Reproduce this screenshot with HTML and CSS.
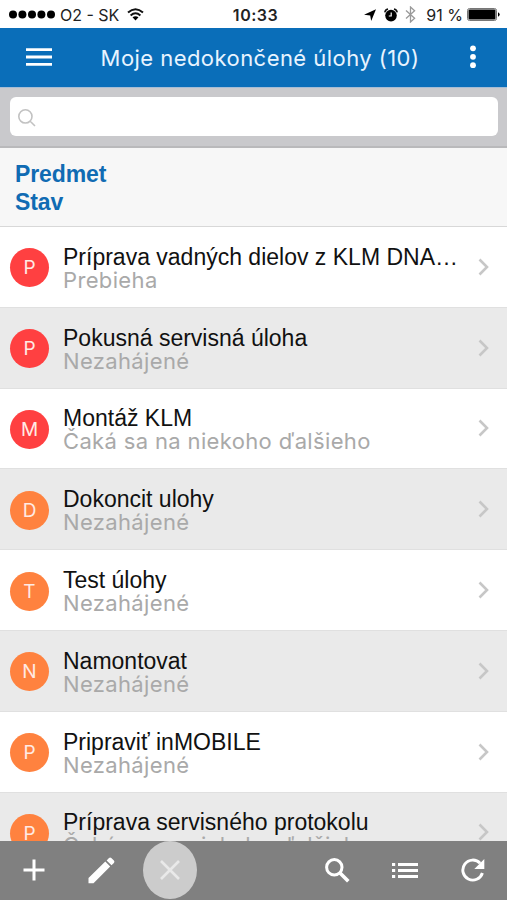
FILE: index.html
```html
<!DOCTYPE html>

<html lang="sk">
    <head>
        <title>Moje úlohy</title>
        <meta charset="UTF-8">
        <meta name="viewport" content="width=device-width, initial-scale=1.0">

        <link rel="stylesheet" href="styles.css">

    </head>
    <body>
        <div class="page">
            <div class="status">
                <div class="signal">
                    <svg width="46" height="9" viewBox="0 0 46 9">
                        <circle cx="4" cy="4.5" r="4"/><circle cx="13.4" cy="4.5" r="4"/><circle cx="23" cy="4.5" r="4"/><circle cx="32.4" cy="4.5" r="4"/><circle cx="42" cy="4.5" r="4"/>
                    </svg>
                    <span class="carrier">O2 - SK</span>
                    <svg class="wifi" width="17" height="13" viewBox="0 0 17 13">
                        <path d="M1 4.6Q8.5-2 16 4.6M3.6 7.4Q8.5 3.2 13.4 7.4" fill="none" stroke="#111" stroke-width="2"/>
                        <path d="M5.5 9.3Q8.5 7 11.5 9.3L8.5 12.5z"/>
                    </svg>
                </div>
                <span class="time">10:33</span>
                <div class="right">
                    <svg width="12" height="12" viewBox="0 0 12 12"><path d="M12 .3L7.2 12 6.2 6.6 0 5.8z"/></svg>
                    <svg class="alarm" width="14" height="14" viewBox="0 0 14 14">
                        <circle cx="7" cy="7.6" r="5.8"/>
                        <path d="M.8 4.4Q1.2 1.6 4 1M13.2 4.4Q12.8 1.6 10 1" stroke="#111" stroke-width="1.5" fill="none"/>
                        <path d="M7.2 4.6V8H4.8" stroke="#fff" stroke-width="1.2" fill="none"/>
                    </svg>
                    <svg class="bt" width="11" height="17" viewBox="0 0 11 17"><path d="M1 4.5L9.6 12.3 5.5 16V1L9.6 4.7 1 12.5" fill="none" stroke="#999" stroke-width="1.3"/></svg>
                    <span class="percent">91 %</span>
                    <svg width="33" height="13" viewBox="0 0 33 13">
                        <rect x=".5" y=".5" width="29" height="12" rx="2" fill="none" stroke="#777"/>
                        <rect x="1.5" y="1.5" width="27" height="10" rx="1"/>
                        <path d="M31 4.3Q32.7 5 32.7 6.5T31 8.7z"/>
                    </svg>
                </div>
            </div>
            <div class="header">
                <svg class="menu" width="26" height="18" viewBox="0 0 26 18"><path d="M0 1.6h26M0 9h26M0 16.4h26" stroke="#fff" stroke-width="2.8"/></svg>
                <h1>Moje nedokončené úlohy (10)</h1>
                <svg width="6" height="24" viewBox="0 0 6 24" fill="#fff"><circle cx="3" cy="3.3" r="2.9"/><circle cx="3" cy="11.8" r="2.9"/><circle cx="3" cy="20.2" r="2.9"/></svg>
            </div>
            <div class="search">
                <div class="searchBox">
                    <svg width="18" height="18" viewBox="0 0 18 18"><path d="M12 12l5 5M14 7.4a6.6 6.6 0 1 1-13.2 0a6.6 6.6 0 0 1 13.2 0z" fill="none" stroke="#c2c2c2" stroke-width="1.6"/></svg>
                </div>
            </div>
            <div class="columns">
                <div>Predmet</div>
                <div>Stav</div>
            </div>
            <div class="list" id="list"></div>
            <div class="toolbar">
                <svg class="add" width="22" height="22" viewBox="0 0 22 22"><path d="M11 .5v21M.5 11h21" stroke="#fff" stroke-width="3"/></svg>
                <svg class="edit" width="27" height="27" viewBox="0 0 27 27" fill="#fff"><path d="M.5 21L17.3 4.6l4.9 4.9L5.5 26.3H.5zM18.6 3.4L21 1q1.2-1 2.3 0l2.6 2.6q1.1 1.2 0 2.3l-2.4 2.4z"/></svg>
                <div class="cancel">
                    <svg width="20" height="20" viewBox="0 0 20 20"><path d="M1 1l18 18M19 1L1 19" stroke="#e9e9e9" stroke-width="2.6"/></svg>
                </div>
                <svg class="find" width="25" height="25" viewBox="0 0 25 25" fill="none" stroke="#fff"><circle cx="9.3" cy="9.3" r="7.7" stroke-width="3"/><path d="M14.8 14.8l8.5 8.5" stroke-width="3.6"/></svg>
                <svg class="lines" width="26" height="15" viewBox="0 0 26 15"><path d="M0 1.5h3.2M6 1.5h20M0 7.5h3.2M6 7.5h20M0 13.5h3.2M6 13.5h20" stroke="#fff" stroke-width="2.8"/></svg>
                <svg class="reload" width="24" height="24" viewBox="0 0 24 24"><path d="M19.1 5.2A10 10 0 1 0 21.4 15" fill="none" stroke="#fff" stroke-width="2.9"/><path d="M23.3 1v10H13.3z" fill="#fff"/></svg>
            </div>
        </div>
        <script>
            //name, state, color class
            var tasks = [
                ["Príprava vadných dielov z KLM DNA…", "Prebieha", "red"],
                ["Pokusná servisná úloha", "Nezahájené", "red"],
                ["Montáž KLM", "Čaká sa na niekoho ďalšieho", "red"],
                ["Dokoncit ulohy", "Nezahájené", "orange"],
                ["Test úlohy", "Nezahájené", "orange"],
                ["Namontovat", "Nezahájené", "orange"],
                ["Pripraviť inMOBILE", "Nezahájené", "orange"],
                ["Príprava servisného protokolu", "Čaká sa na niekoho ďalšieho", "orange"]
            ];
            var list = document.querySelector("#list");

            tasks.forEach(function(t){
                list.innerHTML += '<div class="row">' +
                    '<div class="avatar ' + t[2] + '">' + t[0][0] + '</div>' +
                    '<div class="text"><div class="name">' + t[0] + '</div><div class="state">' + t[1] + '</div></div>' +
                    '<svg class="arrow" width="11" height="18" viewBox="0 0 11 18"><path d="M1.5 1.5L9 9l-7.5 7.5" fill="none" stroke="#c7c7c7" stroke-width="2.6"/></svg>' +
                    '</div>';
            });
        </script>
    </body>
</html>
```
FILE: styles.css
```css
body{
    margin: 0;
    font-family: Inter, sans-serif;
}
svg{
    display: block;
    flex: none;
}
.page{
    width: 507px;
    height: 900px;
    display: flex;
    flex-direction: column;
    overflow: hidden;
    background: #fff;
}
.status{
    height: 28px;
    flex: none;
    display: grid;
    grid-template-columns: 1fr auto 1fr;
    align-items: center;
    padding: 1px 7px 0 9px;
    box-sizing: border-box;
    font-size: 16px;
    color: #222;
}
.signal, .right{
    display: flex;
    align-items: center;
}
.right{
    justify-content: flex-end;
}
.carrier{
    margin: 0 8px 0 5px;
    letter-spacing: 0;
}
.time{
    padding-left: 2px;
    font-weight: 600;
    letter-spacing: 0.5px;
}
.alarm{
    margin-left: 8px;
}
.bt{
    margin: 0 10px 0 7px;
}
.percent{
    margin-right: 4px;
}
.header{
    height: 60px;
    flex: none;
    display: flex;
    align-items: center;
    justify-content: space-between;
    padding: 0 31px 2px 26px;
    box-sizing: border-box;
    background: #0a6eb9;
    border-bottom: 1px solid #a5bdd6;
}
.header h1{
    margin: 2px 2px 0 0;
    font-size: 22px;
    font-weight: 400;
    letter-spacing: 0.45px;
    color: #e8f4ff;
    white-space: nowrap;
}
.search{
    height: 60px;
    flex: none;
    padding: 9px 9px 0 10px;
    box-sizing: border-box;
    background: #c9c9cc;
    border-bottom: 2px solid #b9b9bb;
}
.searchBox{
    height: 39px;
    display: flex;
    align-items: center;
    padding: 2px 0 0 8px;
    box-sizing: border-box;
    background: #fff;
    border-radius: 6px;
}
.columns{
    height: 79px;
    flex: none;
    padding: 12px 15px 0;
    box-sizing: border-box;
    background: #f7f7f7;
    border-bottom: 1px solid #d8d8d8;
    font: bold 23px/28px "Liberation Sans", sans-serif;
    letter-spacing: -0.1px;
    color: #106bb3;
}
.list{
    flex: 1;
    min-height: 0;
    overflow: hidden;
}
.row{
    height: 80.8px;
    display: flex;
    align-items: center;
    padding: 2px 18px 0 10px;
    box-sizing: border-box;
    border-bottom: 1px solid #e0e0e0;
}
.row:nth-child(even){
    background: #eaeaea;
}
.arrow{
    margin-top: -2px;
}
.avatar{
    width: 39px;
    height: 39px;
    flex: none;
    border-radius: 50%;
    font-size: 19px;
    line-height: 39px;
    text-align: center;
    color: #ffeae4;
}
.red{
    background: #ff4041;
}
.orange{
    background: #ff823f;
}
.text{
    flex: 1;
    margin-left: 14px;
    padding-top: 1px;
    white-space: nowrap;
}
.name{
    font: 23px/24px "Liberation Sans", sans-serif;
    color: #111;
}
.state{
    font-size: 22px;
    line-height: 23px;
    letter-spacing: 0.35px;
    color: #a9a9a9;
}
.toolbar{
    height: 59px;
    flex: none;
    display: flex;
    align-items: center;
    padding: 0 22px 1px 23px;
    box-sizing: border-box;
    background: #808080;
}
.edit{
    margin-left: 43px;
}
.cancel{
    width: 54px;
    height: 58px;
    margin-left: 28px;
    display: flex;
    align-items: center;
    justify-content: center;
    border-radius: 50%;
    background: #ccc;
}
.find{
    margin-left: auto;
}
.lines{
    margin-left: 42px;
}
.reload{
    margin-left: 43px;
}
```
